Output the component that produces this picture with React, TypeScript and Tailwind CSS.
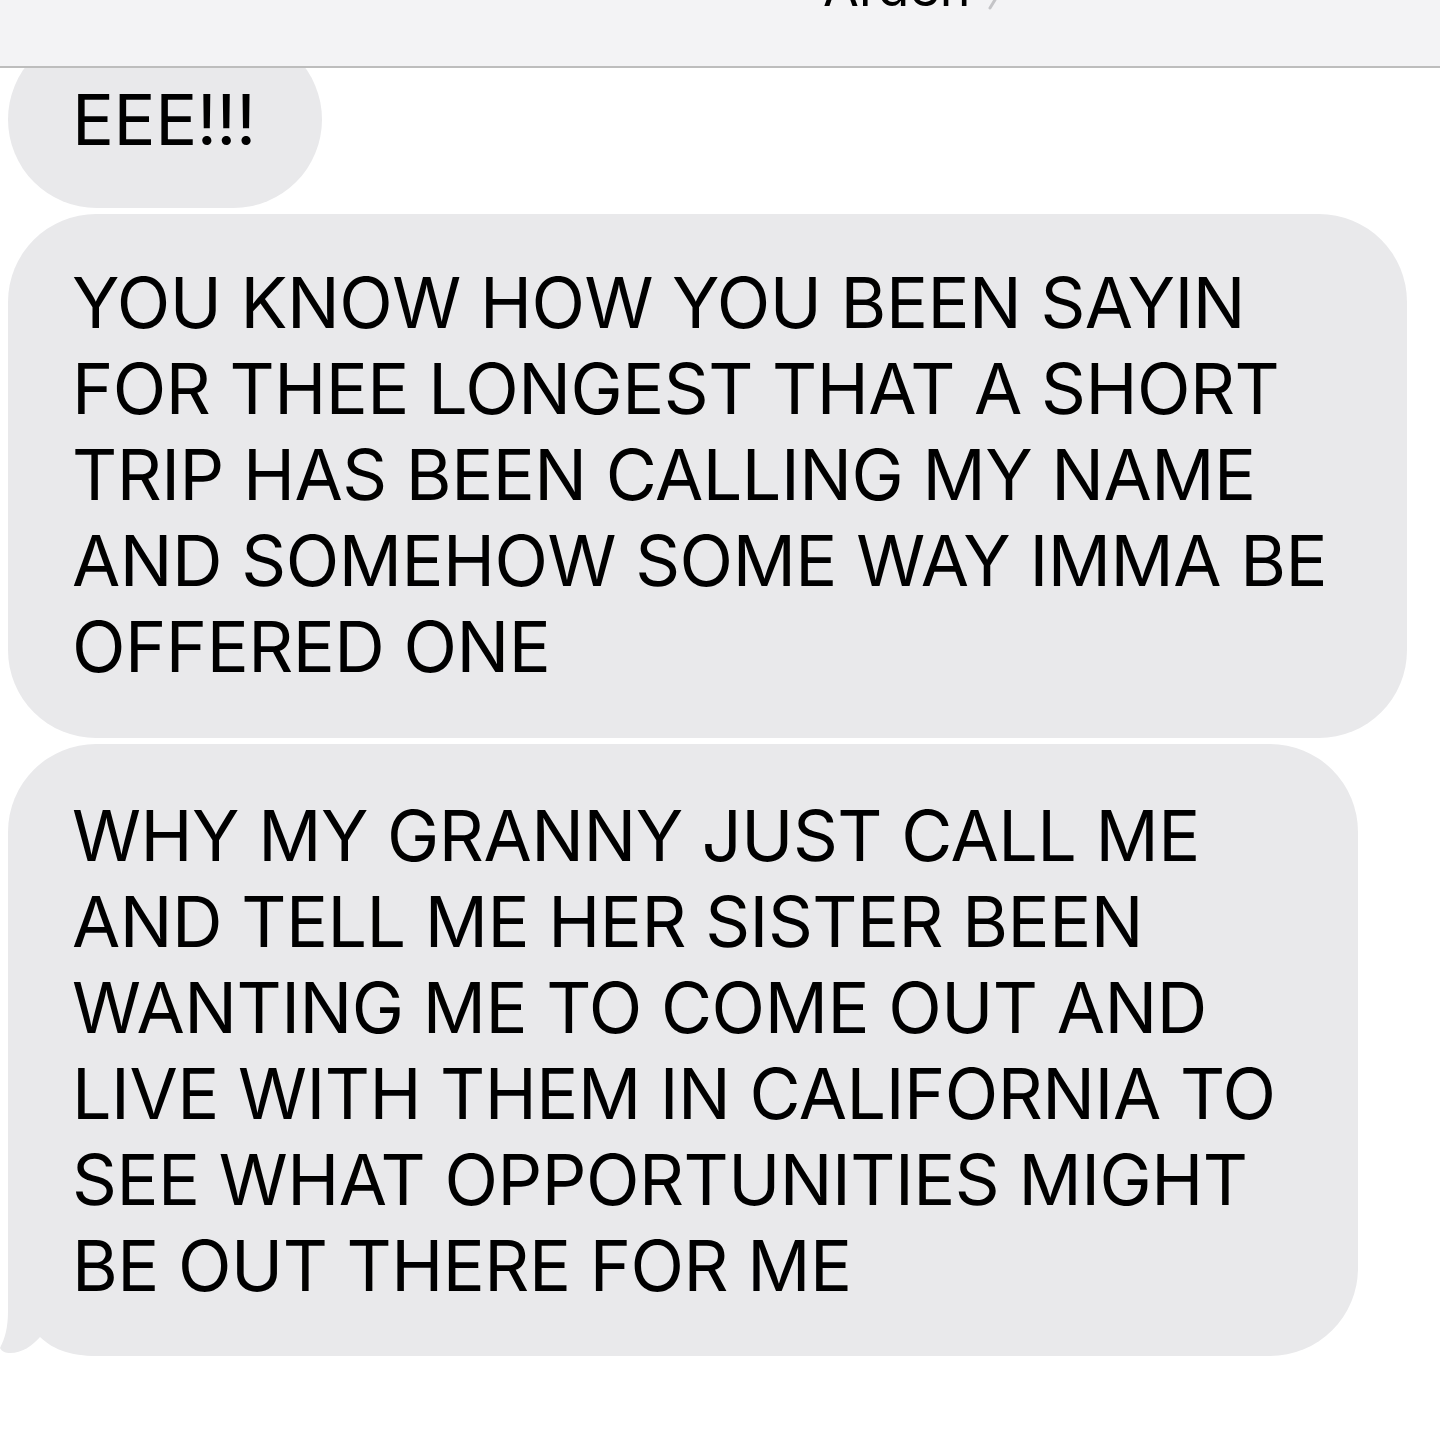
import React from 'react'

const bubbleText = "text-[70px] leading-[86px] text-black tracking-[-0.5px]"

const msgs = [
  ["YOU KNOW HOW YOU BEEN SAYIN", "FOR THEE LONGEST THAT A SHORT", "TRIP HAS BEEN CALLING MY NAME", "AND SOMEHOW SOME WAY IMMA BE", "OFFERED ONE"],
  ["WHY MY GRANNY JUST CALL ME", "AND TELL ME HER SISTER BEEN", "WANTING ME TO COME OUT AND", "LIVE WITH THEM IN CALIFORNIA TO", "SEE WHAT OPPORTUNITIES MIGHT", "BE OUT THERE FOR ME"],
]

export default function App() {
  return (
    <div className="relative w-[1440px] h-[1439px] bg-white overflow-hidden" style={{ fontFamily: 'Inter, "Noto Sans", sans-serif' }}>

      {/* Header (cut off) */}
      <div className="absolute top-0 left-0 w-full h-[68px] bg-[#f3f3f5] border-b-2 border-[#bdbdbd] z-10 overflow-hidden">
        <div className="flex items-start pl-[823px]">
          <span className="text-[52px] leading-[52px] -mt-[38px] text-black">Arden</span>
          <svg width="16" height="40" viewBox="0 0 16 40" className="ml-[18px] -mt-[30px]">
            <path d="M2 2 L13 20 L2 38" fill="none" stroke="#c4c4c7" strokeWidth="3" strokeLinecap="round" strokeLinejoin="round" />
          </svg>
        </div>
      </div>

      {/* Messages */}
      <div className="flex flex-col items-start gap-[6px] pl-[8px] pt-[31px]">

        <div className={`bg-[#e9e9eb] rounded-full pl-[64px] pr-[66px] pt-[46px] pb-[45px] ${bubbleText}`}>
          EEE!!!
        </div>

        <div className={`w-[1399px] bg-[#e9e9eb] rounded-[88px] pl-[64px] pt-[46px] pb-[48px] ${bubbleText}`}>
          {msgs[0].map((l, i) => (
            <div key={i} className="whitespace-nowrap">{l}</div>
          ))}
        </div>

        <div className={`relative w-[1350px] bg-[#e9e9eb] rounded-[88px] pl-[64px] pt-[49px] pb-[47px] ${bubbleText}`}>
          {msgs[1].map((l, i) => (
            <div key={i} className="relative z-10 whitespace-nowrap">{l}</div>
          ))}
          {/* tail */}
          <svg width="100" height="100" viewBox="0 0 100 100" className="absolute -left-[8px] bottom-0">
            <path d="M8 0 L8 55 C8 72 5 82 0 92 C2 96 6 97 10 97 C22 97 32 90 40 81 C55 95 72 100 100 100 L100 0 Z" fill="#e9e9eb" />
          </svg>
        </div>

      </div>
    </div>
  )
}
